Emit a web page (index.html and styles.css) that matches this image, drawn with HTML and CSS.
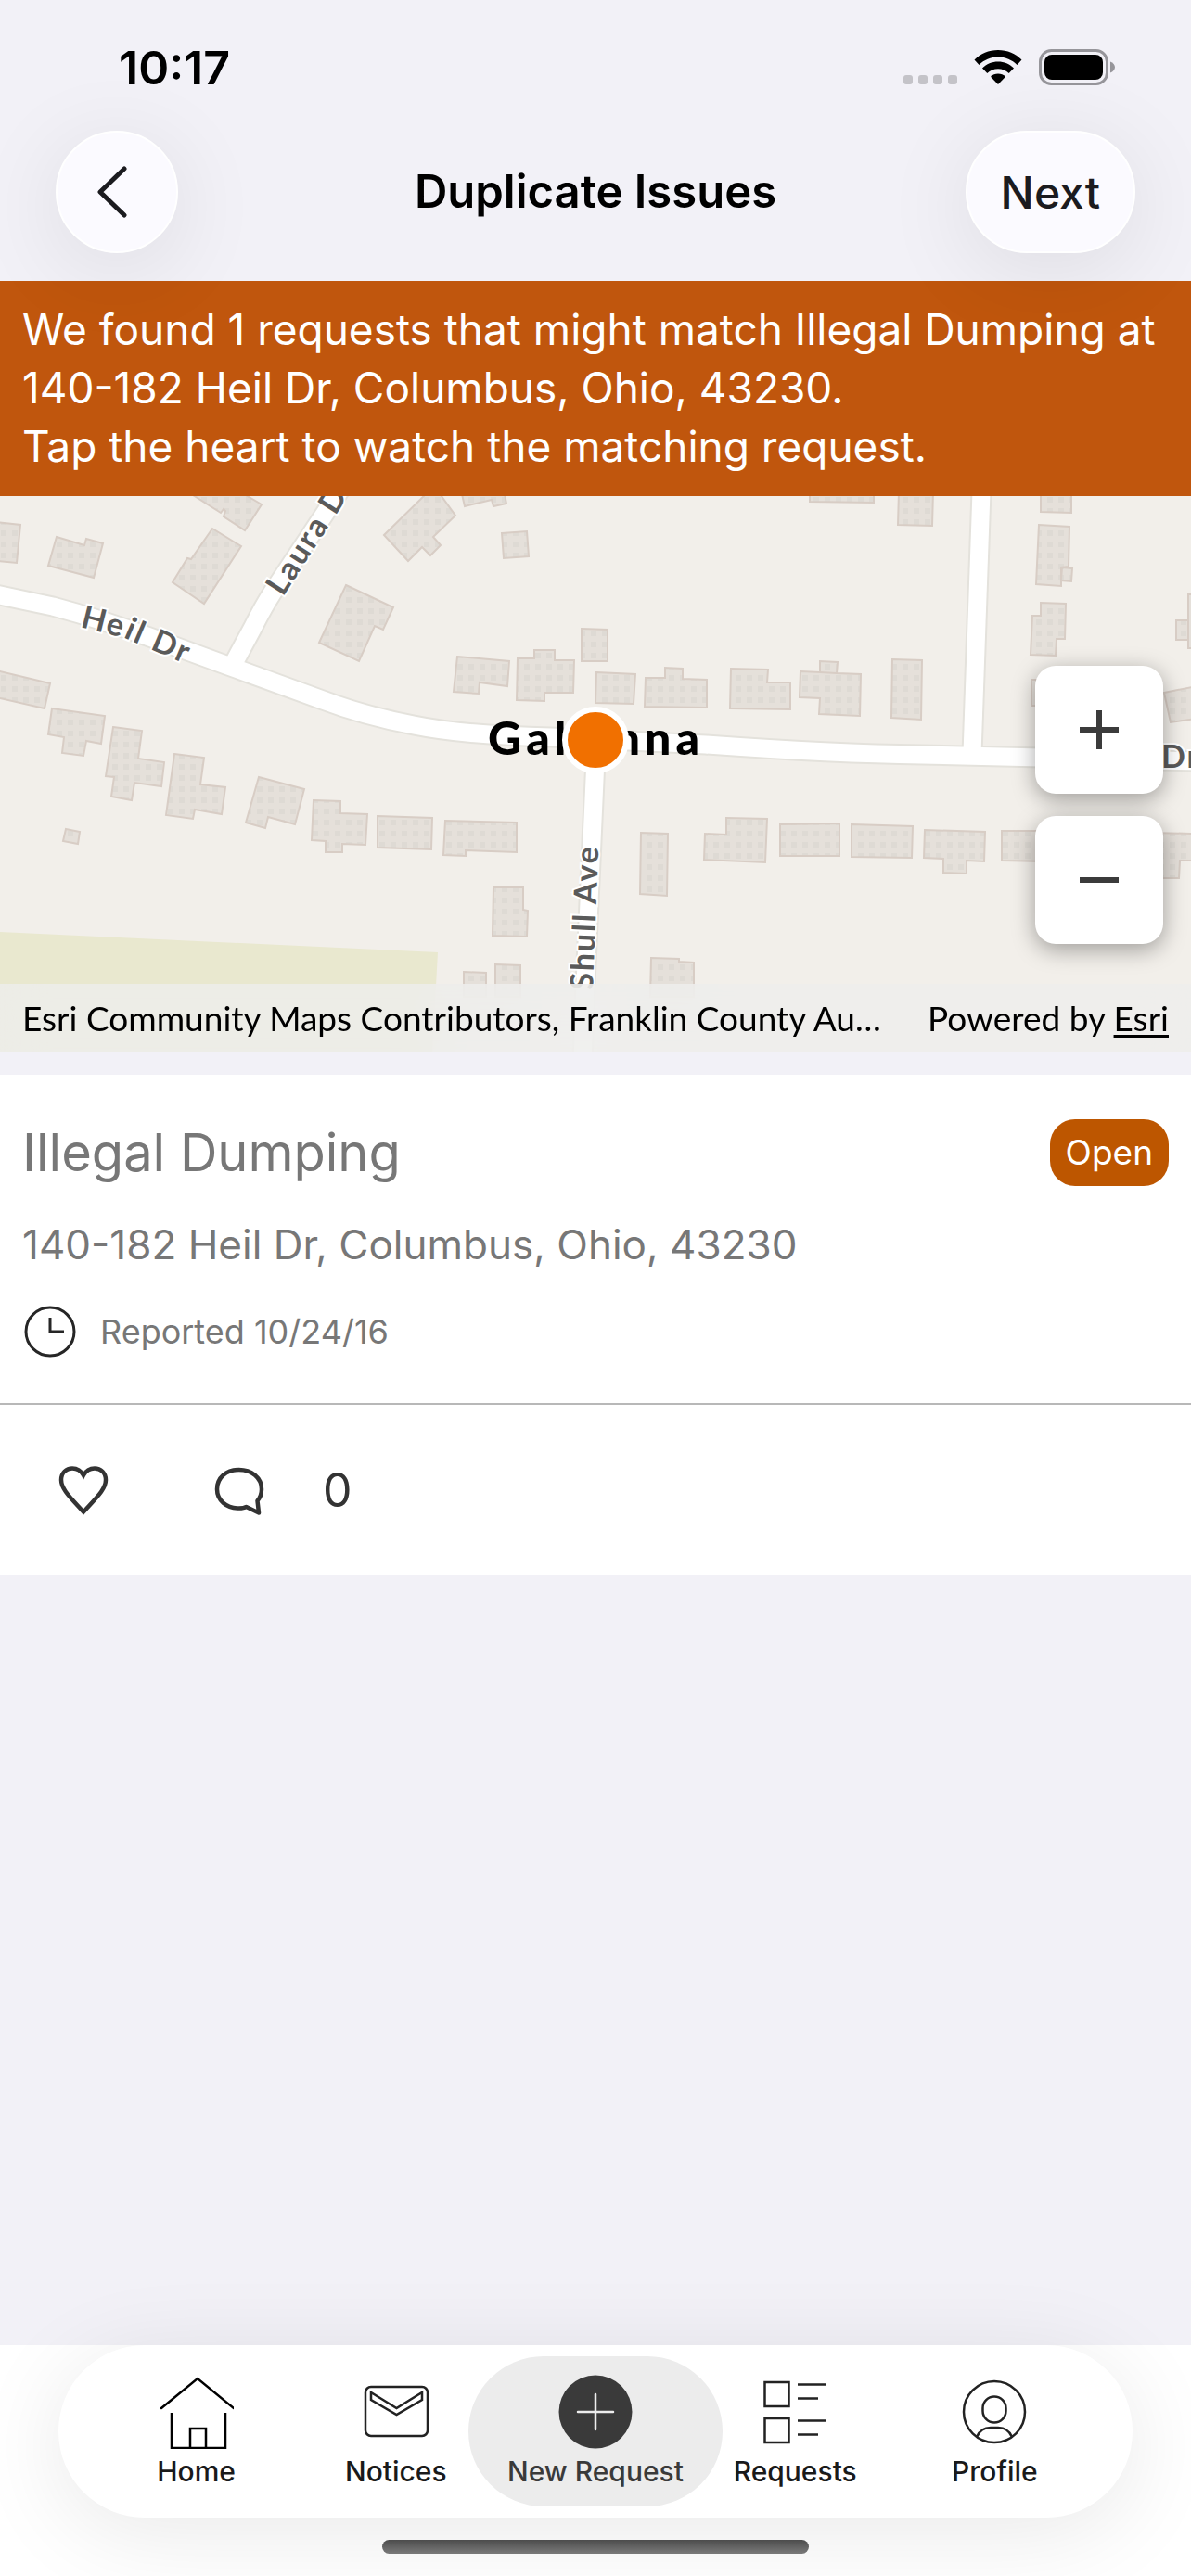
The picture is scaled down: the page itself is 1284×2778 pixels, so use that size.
FILE: index.html
```html
<!DOCTYPE html>
<html lang="en">
<head>
    <meta charset="UTF-8">
    <meta name="viewport" content="width=device-width, initial-scale=1.0">
    <title>Duplicate Issues</title>
    <link rel="stylesheet" href="styles.css">
</head>
<body>
    <header class="top">
        <div class="status-bar">
            <span class="time">10:17</span>
            <div class="status-icons">
                <svg width="58" height="38" viewBox="0 0 58 38" fill="#c4c3c8">
                    <rect x="0" y="27" width="10" height="10" rx="3"/>
                    <rect x="16" y="27" width="10" height="10" rx="3"/>
                    <rect x="32" y="27" width="10" height="10" rx="3"/>
                    <rect x="48" y="27" width="10" height="10" rx="3"/>
                </svg>
                <svg width="52" height="38" viewBox="0 0 52 38">
                    <path d="M26 0C16 0 7 4 0.5 10.500L5.500 16C11 10.500 18 7.500 26 7.500S41 10.500 46.500 16L51.500 10.500C45 4 36 0 26 0Z"/>
                    <path d="M26 12.500C19.500 12.500 13.500 15 9 19.500L14.300 25C17.500 22 21.500 20.200 26 20.200S34.500 22 37.700 25L43 19.500C38.500 15 32.500 12.500 26 12.500Z"/>
                    <path d="M26 25.500C23 25.500 20 26.700 18 28.700L26 37L34 28.700C32 26.700 29 25.500 26 25.500Z"/>
                </svg>
                <svg width="82" height="40" viewBox="0 0 82 40">
                    <rect x="1.500" y="1.500" width="72" height="36" rx="12" fill="none" stroke="#96959a" stroke-width="3"/>
                    <rect x="6" y="6" width="63" height="27" rx="8"/>
                    <path d="M77 13.500C80 14.500 82 17 82 19.500S80 24.500 77 25.500Z" fill="#96959a"/>
                </svg>
            </div>
        </div>
        <div class="nav-bar">
            <button class="round-btn back" aria-label="Back">
                <svg width="34" height="56" viewBox="0 0 34 56"><path d="M30 3L4 28L30 53" fill="none" stroke="#1b1b1f" stroke-width="5" stroke-linecap="round" stroke-linejoin="round"/></svg>
            </button>
            <h1>Duplicate Issues</h1>
            <button class="round-btn next">Next</button>
        </div>
    </header>

    <main>
        <p class="banner">We found 1 requests that might match Illegal Dumping at 140-182 Heil Dr, Columbus, Ohio, 43230.<br>Tap the heart to watch the matching request.</p>

        <section class="map">
            <svg class="map-canvas" viewBox="0 0 1284 600" preserveAspectRatio="xMidYMid slice">
                <defs>
                    <pattern id="dots" width="12" height="12" patternUnits="userSpaceOnUse">
                        <rect width="12" height="12" fill="#e5e0da"/>
                        <rect x="1" y="1" width="6" height="6" fill="#dedad4"/>
                    </pattern>
                    <path id="heil" d="M86 141L134 153L202 182L260 205"/>
                    <path id="laura" d="M305 109L374 2L432 -92"/>
                    <path id="shull" d="M639 533L648 313"/>
                </defs>
                <rect width="1284" height="600" fill="#f2efea"/>
                <path d="M0 470L472 492L466 600H0Z" fill="#e9e8cf"/>

                <!-- streets -->
                <g fill="none" stroke="#e4e2dc" stroke-width="23" stroke-linejoin="round">
                    <path d="M-5 106L57 119Q110 133 164 153L246 183L348 220Q393 237 446 247Q500 258 594 260L761 268Q900 278 994 279L1290 286"/>
                    <path d="M251 182L273 141Q284 119 295 102L358 7L372 -15"/>
                    <path d="M1058 -5L1048 278"/>
                    <path d="M643 262L631 526L628 610"/>
                </g>
                <g fill="none" stroke="#fff" stroke-width="19" stroke-linejoin="round">
                    <path d="M-5 106L57 119Q110 133 164 153L246 183L348 220Q393 237 446 247Q500 258 594 260L761 268Q900 278 994 279L1290 286"/>
                    <path d="M251 182L273 141Q284 119 295 102L358 7L372 -15"/>
                    <path d="M1058 -5L1048 278"/>
                    <path d="M643 262L631 526L628 610"/>
                </g>

                <!-- buildings -->
                <g fill="url(#dots)" stroke="#d8cdc5" stroke-width="2">
                    <path d="M-4 28L22 31L18 72L-4 70Z"/>
                    <path d="M61 44L91 53L93 46L111 51L101 88L52 75Z"/>
                    <path d="M205 -3L238 18L241 14L243 16L241 22L264 37L282 9L258 -5Z"/>
                    <path d="M229 35L260 54L220 116L186 93L202 67L206 68Z"/>
                    <path d="M414 42L461 -4H473L491 21L467 44L475 53L464 64L455 55L440 70Z"/>
                    <path d="M498 -2L501 11L530 4L532 11L546 8L544 -2Z"/>
                    <path d="M541 40L568 38L570 65L543 67Z"/>
                    <path d="M373 96L424 120L413 144L404 140L387 178L344 158Z"/>
                    <path d="M493 173L549 178L547 205L517 201L516 213L489 211Z"/>
                    <path d="M558 175H576V166H598V177H619L618 212H587V221L557 220Z"/>
                    <path d="M627 143L655 144V178H627Z"/>
                    <path d="M643 190L685 192L683 224L642 223Z"/>
                    <path d="M696 196H717V185L736 186V197L762 198V228L695 227Z"/>
                    <path d="M788 186L828 187L827 201H852V230L787 229Z"/>
                    <path d="M863 189L884 190V178L903 179L902 191L928 192L927 237L883 235L884 218L862 217Z"/>
                    <path d="M884 190L902 191"/>
                    <path d="M962 176L994 177L993 241L961 239Z"/>
                    <path d="M873 -3H942V7L873 6Z"/>
                    <path d="M969 -5H1006L1005 32L968 31Z"/>
                    <path d="M1122 -5H1155V18L1122 17Z"/>
                    <path d="M1120 31L1153 33L1152 76L1144 77V97L1117 95Z"/>
                    <path d="M1145 77L1156 78L1155 92L1144 91Z"/>
                    <path d="M1122 115L1149 116L1148 154H1139L1138 172L1111 171L1113 129H1122Z"/>
                    <path d="M1112 198H1130V226H1112Z"/>
                    <path d="M1268 134H1281V155H1268Z"/>
                    <path d="M1281 106H1290V164H1281Z"/>
                    <path d="M1255 212L1290 205V240L1262 244Z"/>
                    <path d="M-4 188L54 202L48 229L-4 217Z"/>
                    <path d="M56 229L113 237L109 267L93 264L90 280L67 277L69 260L52 257Z"/>
                    <path d="M122 249L153 253L149 283L177 287L174 313L145 309L142 328L120 324L123 303L114 302Z"/>
                    <path d="M188 278L220 282L216 311L243 314L239 343L210 338L208 348L179 344Z"/>
                    <path d="M279 303L328 316L318 354L289 346L286 358L265 352Z"/>
                    <path d="M338 328L367 329V342L396 343L394 376L369 375V384H351V372L336 371Z"/>
                    <path d="M407 345L466 347L465 381L407 379Z"/>
                    <path d="M480 350L557 352V384L502 382V388L478 387Z"/>
                    <path d="M71 359L86 362L84 375L68 372Z"/>
                    <path d="M532 422H564V446L569 447L568 475L531 474Z"/>
                    <path d="M500 513L524 514V540H500Z"/>
                    <path d="M534 505L561 506V540H534Z"/>
                    <path d="M691 363L720 364L719 431L690 429Z"/>
                    <path d="M783 347L827 348L825 395L759 392L760 364L783 365Z"/>
                    <path d="M841 354L905 353V388H841Z"/>
                    <path d="M918 354L984 356L983 390L918 389Z"/>
                    <path d="M997 360L1062 362L1061 394L1042 393V407L1017 406V391L996 390Z"/>
                    <path d="M1080 361H1130V394L1080 393Z"/>
                    <path d="M1240 363L1290 364V393H1272L1271 412H1240Z"/>
                    <path d="M702 498L732 499V502L748 503V540H701Z"/>
                </g>

                <g class="street-label">
                    <text><textPath href="#heil">Heil Dr</textPath></text>
                    <text><textPath href="#laura">Laura Dr</textPath></text>
                    <text><textPath href="#shull">Shull Ave</textPath></text>
                    <text x="1252" y="293">Dr</text>
                </g>
                <text class="city-label" x="526" y="279">Gahanna</text>
                <circle cx="642" cy="263" r="33" fill="#f17000" stroke="#fff" stroke-width="6"/>
            </svg>
            <div class="zoom-controls">
                <button aria-label="Zoom in"><svg width="42" height="42" viewBox="0 0 42 42"><path d="M0 21H42M21 0V42" stroke="#3b3b3b" stroke-width="6"/></svg></button>
                <button aria-label="Zoom out"><svg width="42" height="42" viewBox="0 0 42 42"><path d="M0 21H42" stroke="#3b3b3b" stroke-width="6"/></svg></button>
            </div>
            <div class="attribution">
                <span>Esri Community Maps Contributors, Franklin County Au…</span>
                <span>Powered by <a href="#">Esri</a></span>
            </div>
        </section>

        <article class="request">
            <div class="request-info">
                <div class="request-title">
                    <h2>Illegal Dumping</h2>
                    <span class="badge">Open</span>
                </div>
                <p class="address">140-182 Heil Dr, Columbus, Ohio, 43230</p>
                <div class="reported">
                    <svg width="56" height="56" viewBox="0 0 56 56" fill="none" stroke="#262626" stroke-width="3">
                        <circle cx="28" cy="28" r="26"/>
                        <path d="M28 13V28H43"/>
                    </svg>
                    <span>Reported 10/24/16</span>
                </div>
            </div>
            <div class="request-actions">
                <button aria-label="Watch request">
                    <svg width="56" height="56" viewBox="0 0 56 56"><path d="M28 51.500C14 36 4 27 4 17C4 9 9.500 4.500 16 4.500C21.500 4.500 25.500 7.500 28 12C30.500 7.500 34.500 4.500 40 4.500C46.500 4.500 52 9 52 17C52 27 42 36 28 51.500Z" fill="none" stroke="#333" stroke-width="4.500"/></svg>
                </button>
                <button class="comments" aria-label="Comments">
                    <svg width="56" height="56" viewBox="0 0 56 56"><path d="M49 52.500L35.500 46C33 47.500 30.500 47.500 27.500 47.500C14 47.500 4 39 4 27C4 14.500 14 6 27.500 6S52 14.500 52 27C52 32 50.500 36 47.500 39.500Z" fill="none" stroke="#333" stroke-width="4.500" stroke-linejoin="round"/></svg>
                    <span>0</span>
                </button>
            </div>
        </article>
    </main>

    <footer>
        <nav class="tab-bar">
            <a href="#">
                <svg width="80" height="80" viewBox="0 0 80 80" fill="none" stroke="#000" stroke-width="2.500" stroke-linecap="round">
                    <path d="M2 36L41 4L80 36"/>
                    <path d="M13 41V79H71V41M33 79V58H50V79" stroke-linecap="butt"/>
                </svg>
                <span>Home</span>
            </a>
            <a href="#">
                <svg width="80" height="80" viewBox="0 0 80 80" fill="none" stroke="#222" stroke-width="2.500">
                    <rect x="7" y="13" width="67" height="53" rx="6"/>
                    <path d="M13 19L40.500 36L68 19V27L40.500 43L13 27Z"/>
                </svg>
                <span>Notices</span>
            </a>
            <a href="#" class="active">
                <svg width="80" height="80" viewBox="0 0 80 80">
                    <circle cx="40" cy="40" r="39.500" fill="#3a3a3a"/>
                    <path d="M40 21V59M21 40H59" stroke="#ededed" stroke-width="2.500" stroke-linecap="round"/>
                </svg>
                <span>New Request</span>
            </a>
            <a href="#">
                <svg width="80" height="80" viewBox="0 0 80 80" fill="none" stroke="#222" stroke-width="2.500">
                    <rect x="7.500" y="8" width="26" height="26"/>
                    <rect x="7.500" y="47" width="26" height="26"/>
                    <path d="M43 10.500H74M43 25.500H65M43 49.500H74M43 64.500H65"/>
                </svg>
                <span>Requests</span>
            </a>
            <a href="#">
                <svg width="80" height="80" viewBox="0 0 80 80" fill="none" stroke="#222" stroke-width="2.500">
                    <circle cx="40" cy="40" r="33"/>
                    <rect x="27.500" y="23.500" width="25" height="28" rx="12.500"/>
                    <path d="M21 67C24 60 30 57 36 57H44C50 57 56 60 59 67"/>
                </svg>
                <span>Profile</span>
            </a>
        </nav>
        <div class="home-indicator"></div>
    </footer>
</body>
</html>
```

FILE: styles.css
```css
* {
    box-sizing: border-box;
}
body {
    font-family: Inter, "Liberation Sans", sans-serif;
    background-color: #f2f1f7;
    margin: 0;
    min-height: 100vh;
    display: flex;
    flex-direction: column;
    color: #000;
}
button {
    font-family: inherit;
    border: none;
    background: none;
    padding: 0;
    margin: 0;
}
svg {
    display: block;
}
h1, h2, p {
    margin: 0;
    font-weight: normal;
}
.top {
    position: relative;
    z-index: 1;
}
.status-bar {
    display: flex;
    justify-content: space-between;
    align-items: center;
    height: 141px;
    padding: 4px 82px 0 128px;
}
.time {
    font-size: 50px;
    font-weight: 600;
}
.status-icons {
    display: flex;
    align-items: center;
    gap: 18px;
}
.nav-bar {
    display: grid;
    grid-template-columns: 1fr auto 1fr;
    align-items: center;
    padding: 0 60px 30px;
}
.nav-bar h1 {
    font-size: 49px;
    line-height: 60px;
    font-weight: 600;
}
.round-btn {
    display: flex;
    align-items: center;
    justify-content: center;
    height: 132px;
    min-width: 132px;
    border-radius: 66px;
    border: 2px solid #fff;
    background-color: #fbfaff;
    color: #1b1b1f;
    font-size: 48px;
    font-weight: 500;
    box-shadow: 0 16px 100px rgba(0, 0, 0, 0.09);
}
.back {
    justify-self: start;
    padding-right: 10px;
}
.next {
    justify-self: end;
    padding: 0 36px;
}
.banner {
    background-color: #c0560d;
    color: white;
    font-size: 46px;
    line-height: 63px;
    padding: 21px 24px 22px;
}
.map {
    position: relative;
    height: 600px;
    overflow: hidden;
}
.map-canvas {
    width: 100%;
    height: 100%;
}
.street-label {
    font-family: Lato, sans-serif;
    font-size: 34px;
    font-weight: bold;
    letter-spacing: 2px;
    fill: #5a5a5a;
    stroke: #fff;
    stroke-width: 4px;
    paint-order: stroke;
}
.city-label {
    font-family: Lato, sans-serif;
    font-size: 50px;
    font-weight: 900;
    letter-spacing: 5px;
    fill: #000;
}
.zoom-controls {
    position: absolute;
    top: 183px;
    right: 30px;
    display: flex;
    flex-direction: column;
    gap: 24px;
}
.zoom-controls button {
    width: 138px;
    height: 138px;
    display: flex;
    align-items: center;
    justify-content: center;
    border-radius: 22px;
    background-color: #fff;
    box-shadow: 0 6px 24px rgba(0, 0, 0, 0.35);
}
.attribution {
    position: absolute;
    left: 0;
    right: 0;
    bottom: 0;
    height: 74px;
    padding: 0 24px;
    display: flex;
    align-items: center;
    justify-content: space-between;
    font-family: Lato, sans-serif;
    font-size: 37px;
    line-height: 44px;
    white-space: nowrap;
    background-color: rgba(238, 238, 236, 0.8);
    backdrop-filter: blur(24px);
}
.attribution a {
    color: #000;
    text-underline-offset: 4px;
}
.request {
    margin-top: 24px;
    background-color: #fff;
}
.request-info {
    padding: 48px 24px 47px;
    color: #777;
    border-bottom: 2px solid #b8b8b8;
}
.request-title {
    display: flex;
    align-items: center;
    justify-content: space-between;
}
.request-title h2 {
    font-size: 56px;
    line-height: 72px;
}
.badge {
    background-color: #bd5600;
    color: #fff;
    font-size: 37px;
    line-height: 72px;
    padding: 0 17px;
    border-radius: 27px;
}
.address {
    font-size: 44px;
    line-height: 56px;
    margin-top: 35px;
}
.reported {
    display: flex;
    align-items: center;
    gap: 26px;
    margin-top: 36px;
    padding-left: 2px;
    font-size: 36px;
    line-height: 60px;
}
.request-actions {
    display: flex;
    align-items: center;
    gap: 112px;
    height: 184px;
    padding-left: 62px;
}
.comments {
    display: flex;
    align-items: center;
    gap: 62px;
    font-size: 50px;
    color: #333;
}
footer {
    margin-top: auto;
    background-color: #fff;
    height: 249px;
}
.tab-bar {
    display: grid;
    grid-template-columns: repeat(5, minmax(0, 1fr));
    margin: 0 63px;
    padding: 12px 41px;
    border-radius: 93px;
    background-color: #fff;
    box-shadow: 0 16px 100px rgba(0, 0, 0, 0.09);
}
.tab-bar a {
    display: flex;
    flex-direction: column;
    align-items: center;
    height: 162px;
    padding-top: 20px;
    border-radius: 81px;
    color: #1a1a1a;
    font-size: 30px;
    font-weight: 500;
    line-height: 48px;
    text-decoration: none;
    white-space: nowrap;
}
.tab-bar .active {
    margin: 0 -29px;
    background-color: #ececec;
    color: #3a3a3a;
}
.home-indicator {
    width: 460px;
    max-width: 40%;
    height: 15px;
    margin: 24px auto 0;
    border-radius: 8px;
    background: linear-gradient(#4c4c4c, #7a7a7a);
}
```
